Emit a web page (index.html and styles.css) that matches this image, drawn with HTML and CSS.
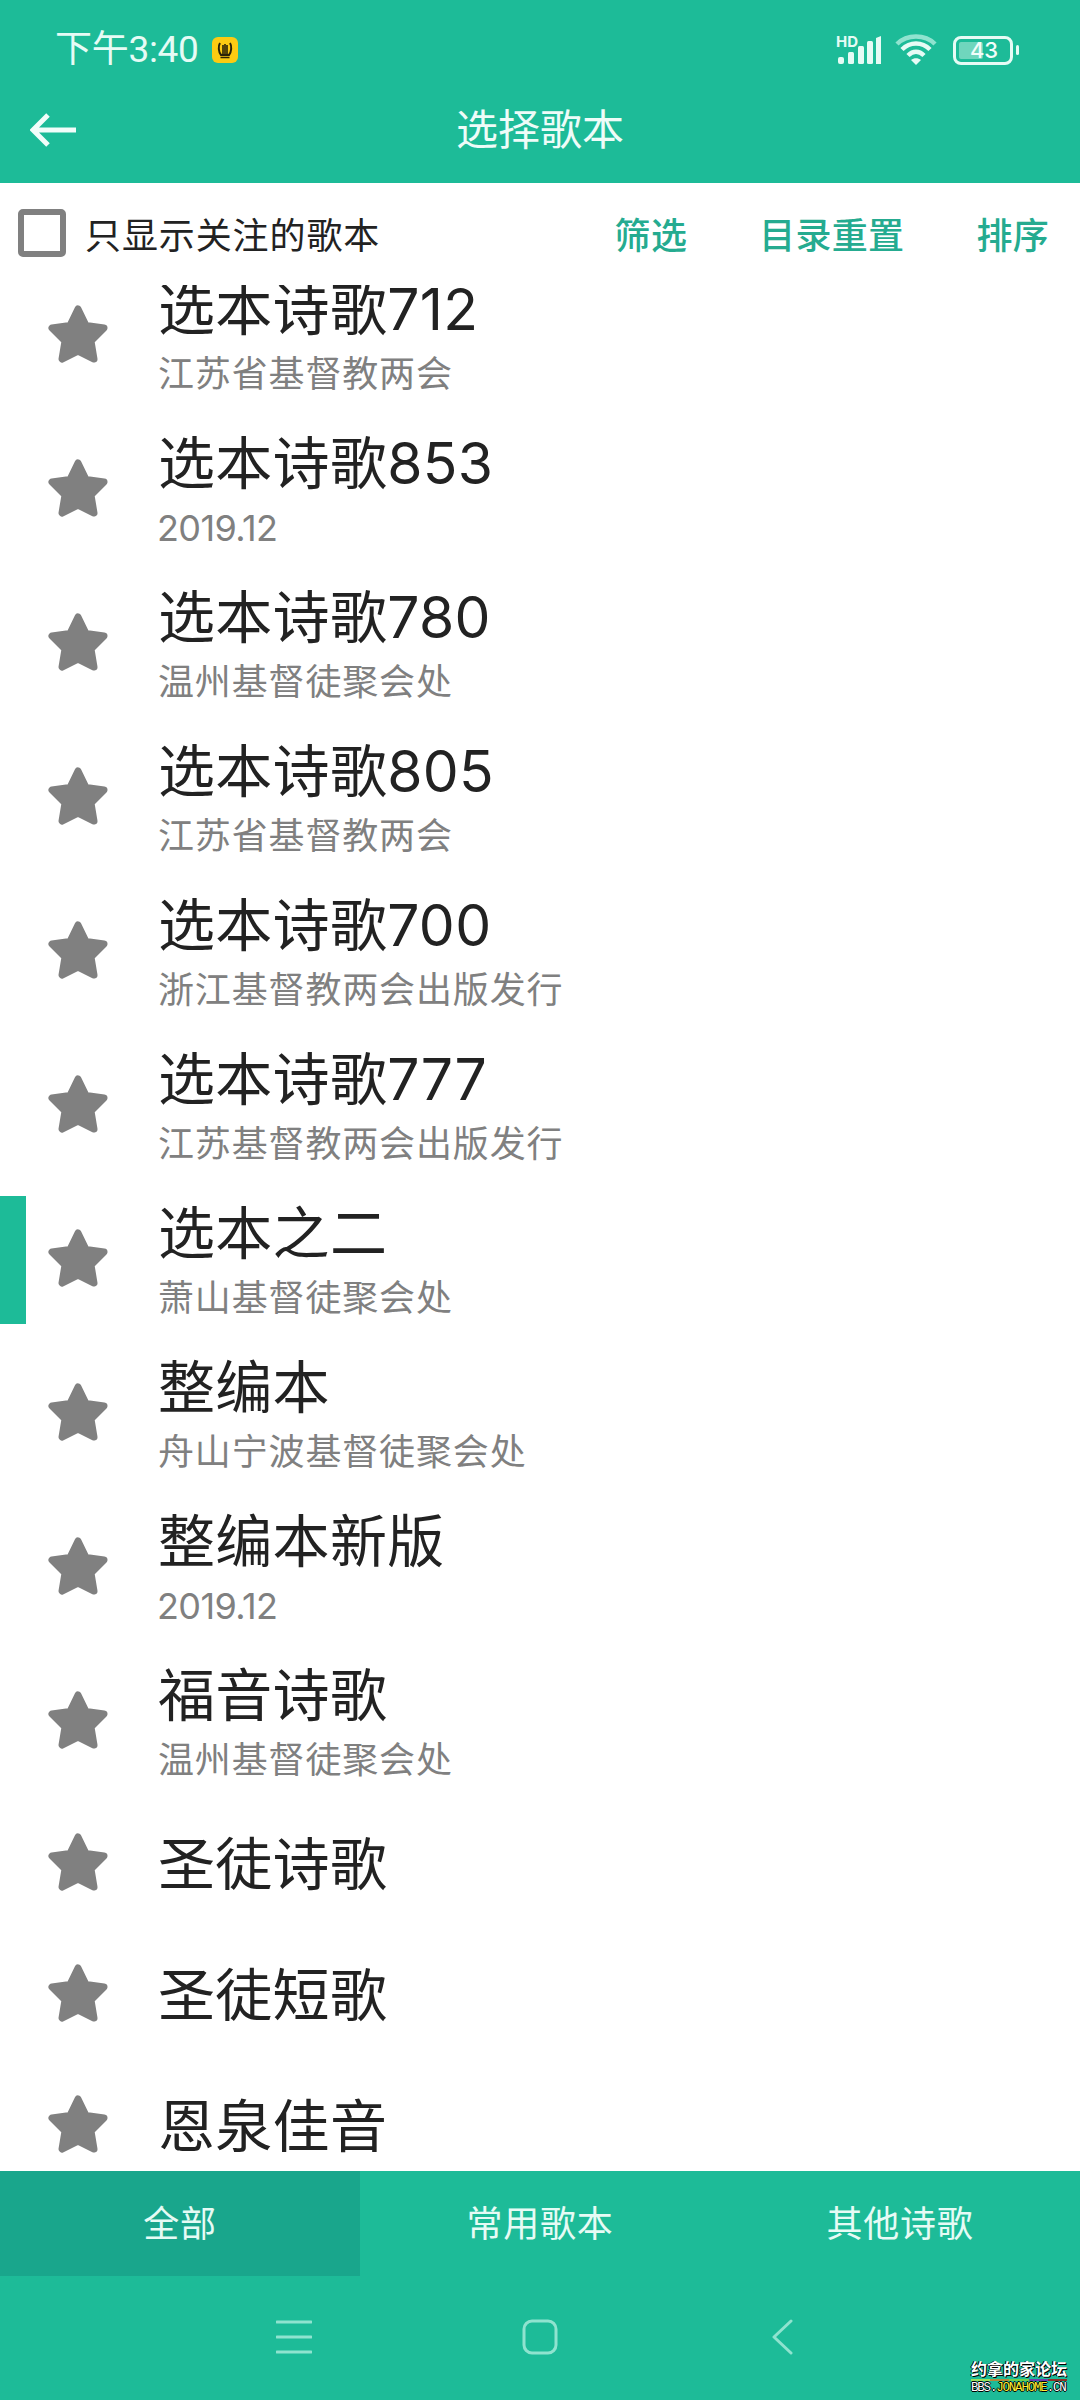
FILE: index.html
```html
<!DOCTYPE html>
<html lang="zh-CN">
<head>
<meta charset="utf-8">
<title>选择歌本</title>
<link rel="stylesheet" href="styles.css">
</head>
<body>
<svg class="defs" width="0" height="0" aria-hidden="true">
  <symbol id="star" viewBox="0 0 64 64">
    <path d="M32 6 L40 22.500 L58 25 L45 38 L48 56 L32 48 L16 56 L19 38 L6 25 L24 22.500 Z" fill="#808080" stroke="#808080" stroke-width="7" stroke-linejoin="round"/>
  </symbol>
</svg>
<div class="phone">
  <header class="header">
    <div class="status">
      <div class="status-left">
        <span class="time">下午3:40</span>
        <svg class="lyre" viewBox="0 0 26 26">
          <rect width="26" height="26" rx="6" fill="#fccb12"/>
          <path d="M8 6 C6 9 6.500 15 9 18 H17 C19.500 15 20 9 18 6" fill="none" stroke="#2a2208" stroke-width="2"/>
          <path d="M11 8V18M13 7V18M15 8V18M8.500 20.500H17.500" fill="none" stroke="#2a2208" stroke-width="1.600"/>
        </svg>
      </div>
      <div class="status-right">
        <svg class="signal" viewBox="0 0 46 30">
          <text x="0" y="12" class="hd">HD</text>
          <rect x="2" y="22" width="6" height="7" rx="2" fill="#e6fbf5"/>
          <rect x="12" y="17" width="6" height="12" rx="1.500" fill="#e6fbf5"/>
          <rect x="22" y="11" width="6" height="18" rx="1.500" fill="#e6fbf5"/>
          <rect x="31" y="6" width="6" height="23" rx="1.500" fill="#e6fbf5"/>
          <path d="M40 3 L45 1 V29 H40 Z" fill="#e6fbf5"/>
        </svg>
        <svg class="wifi" viewBox="0 0 42 32">
          <path d="M2 10 C12 0 30 0 40 10" fill="none" stroke="#8fe3cf" stroke-width="4.500"/>
          <path d="M7 15.500 C15 7.500 27 7.500 35 15.500" fill="none" stroke="#e6fbf5" stroke-width="4.500"/>
          <path d="M13 21.500 C18 16.500 24 16.500 29 21.500" fill="none" stroke="#e6fbf5" stroke-width="4.500"/>
          <path d="M21 31 L16 26 C19 23.500 23 23.500 26 26 Z" fill="#e6fbf5"/>
        </svg>
        <div class="battery">
          <div class="battery-body">
            <span class="battery-fill"></span>
            <span class="battery-num">43</span>
          </div>
          <span class="battery-nub"></span>
        </div>
      </div>
    </div>
    <div class="appbar">
      <svg class="back" viewBox="0 0 46 34">
        <path d="M2 17 H46 M18 2 L3 17 L18 32" fill="none" stroke="#f2fdfa" stroke-width="5"/>
      </svg>
      <h1 class="appbar-title">选择歌本</h1>
    </div>
  </header>

  <div class="toolbar">
    <span class="checkbox"></span>
    <span class="toolbar-label">只显示关注的歌本</span>
    <div class="actions">
      <span class="action">筛选</span>
      <span class="action">目录重置</span>
      <span class="action">排序</span>
    </div>
  </div>

  <main class="list">
    <div class="list-inner">
      <div class="row"><svg class="star"><use href="#star"/></svg><div class="text"><div class="title">选本诗歌712</div><div class="sub">江苏省基督教两会</div></div></div>
      <div class="row"><svg class="star"><use href="#star"/></svg><div class="text"><div class="title">选本诗歌853</div><div class="sub sub-date">2019.12</div></div></div>
      <div class="row"><svg class="star"><use href="#star"/></svg><div class="text"><div class="title">选本诗歌780</div><div class="sub">温州基督徒聚会处</div></div></div>
      <div class="row"><svg class="star"><use href="#star"/></svg><div class="text"><div class="title">选本诗歌805</div><div class="sub">江苏省基督教两会</div></div></div>
      <div class="row"><svg class="star"><use href="#star"/></svg><div class="text"><div class="title">选本诗歌700</div><div class="sub">浙江基督教两会出版发行</div></div></div>
      <div class="row"><svg class="star"><use href="#star"/></svg><div class="text"><div class="title">选本诗歌777</div><div class="sub">江苏基督教两会出版发行</div></div></div>
      <div class="row row-selected"><span class="marker"></span><svg class="star"><use href="#star"/></svg><div class="text"><div class="title">选本之二</div><div class="sub">萧山基督徒聚会处</div></div></div>
      <div class="row"><svg class="star"><use href="#star"/></svg><div class="text"><div class="title">整编本</div><div class="sub">舟山宁波基督徒聚会处</div></div></div>
      <div class="row"><svg class="star"><use href="#star"/></svg><div class="text"><div class="title">整编本新版</div><div class="sub sub-date">2019.12</div></div></div>
      <div class="row"><svg class="star"><use href="#star"/></svg><div class="text"><div class="title">福音诗歌</div><div class="sub">温州基督徒聚会处</div></div></div>
      <div class="row row-single"><svg class="star"><use href="#star"/></svg><div class="text"><div class="title">圣徒诗歌</div></div></div>
      <div class="row row-single"><svg class="star"><use href="#star"/></svg><div class="text"><div class="title">圣徒短歌</div></div></div>
      <div class="row row-single"><svg class="star"><use href="#star"/></svg><div class="text"><div class="title">恩泉佳音</div></div></div>
    </div>
  </main>

  <nav class="tabs">
    <div class="tab tab-active">全部</div>
    <div class="tab">常用歌本</div>
    <div class="tab">其他诗歌</div>
  </nav>

  <div class="sysnav">
    <svg class="nav-icon" viewBox="0 0 36 34">
      <path d="M1 2 H35 M1 17 H35 M1 32 H35" fill="none" stroke="#8fe3cf" stroke-width="3" stroke-linecap="round"/>
    </svg>
    <svg class="nav-icon" viewBox="0 0 36 36">
      <rect x="2" y="2" width="32" height="32" rx="8" fill="none" stroke="#8fe3cf" stroke-width="3"/>
    </svg>
    <svg class="nav-icon" viewBox="0 0 36 36">
      <path d="M23 2 L6 18 L23 34" fill="none" stroke="#8fe3cf" stroke-width="3" stroke-linecap="round" stroke-linejoin="round"/>
    </svg>
    <div class="watermark">
      <div class="wm-name">约拿的家论坛</div>
      <div class="wm-bar"><i class="c1"></i><i class="c2"></i><i class="c3"></i><i class="c4"></i><i class="c5"></i></div>
      <div class="wm-url">BBS.<b>JONAHOME</b>.CN</div>
    </div>
  </div>
</div>
</body>
</html>
```
FILE: styles.css
```css
* { box-sizing: border-box; }
html, body { margin: 0; padding: 0; background: #fff; }
body { font-family: Inter, "Noto Sans CJK SC", "Noto Sans", sans-serif; }
.defs { position: absolute; }

.phone {
  width: 1080px;
  height: 2400px;
  display: flex;
  flex-direction: column;
  overflow: hidden;
  position: relative;
}

/* header */
.header { background: #1dbb98; height: 183px; flex: none; color: #e6fbf5; }
.status {
  height: 77px;
  padding: 23px 0 0 55px;
  display: flex;
  align-items: center;
  justify-content: space-between;
}
.status-left { display: flex; align-items: center; gap: 13px; }
.time { font-family: Roboto, "Noto Sans CJK SC", sans-serif; font-size: 37px; line-height: 54px; letter-spacing: -0.3px; }
.lyre { width: 26px; height: 26px; }
.status-right { display: flex; align-items: center; padding-right: 61px; }
.signal { width: 46px; height: 30px; margin-right: 13px; overflow: visible; }
.hd { font: 700 15px Inter, sans-serif; fill: #e6fbf5; }
.wifi { width: 42px; height: 32px; margin-right: 16px; }
.battery { display: flex; align-items: center; gap: 3px; }
.battery-body {
  width: 60px;
  height: 29px;
  border: 3px solid #e6fbf5;
  border-radius: 8px;
  position: relative;
  display: flex;
  align-items: center;
  justify-content: center;
}
.battery-fill {
  position: absolute;
  left: 3px;
  top: 3px;
  bottom: 3px;
  width: 24px;
  background: #6fd6bd;
  border-radius: 2px;
}
.battery-num { position: relative; left: 1px; font-size: 22px; line-height: 23px; font-weight: 500; color: #f2fdfa; }
.battery-nub { width: 3px; height: 10px; background: #e6fbf5; border-radius: 2px; }

.appbar {
  height: 106px;
  display: flex;
  align-items: center;
  justify-content: center;
  position: relative;
}
.back { position: absolute; left: 30px; top: 36px; width: 46px; height: 34px; }
.appbar-title { margin: 0; font-size: 42px; line-height: 60px; font-weight: 400; color: #eefcf8; }

/* toolbar */
.toolbar {
  height: 102px;
  flex: none;
  display: flex;
  align-items: center;
  padding: 0 31px 2px 18px;
  background: #fff;
  position: relative;
  z-index: 1;
}
.checkbox {
  width: 48px;
  height: 48px;
  border: 6px solid #808080;
  border-radius: 5px;
  flex: none;
}
.toolbar-label { margin-left: 19px; font-size: 36px; letter-spacing: 0.9px; color: #222; }
.actions { margin-left: auto; display: flex; gap: 72px; }
.action { font-size: 36px; font-weight: 500; letter-spacing: 0.3px; color: #25ab90; }

/* list */
.list { flex: 1; min-height: 0; overflow: hidden; background: #fff; }
.list-inner { margin-top: -26px; }
.row {
  height: 154px;
  display: flex;
  align-items: center;
  padding-left: 46px;
  position: relative;
}
.row-single { height: 131px; }
.marker {
  position: absolute;
  left: 0;
  top: 13px;
  width: 26px;
  height: 128px;
  background: #1dbb98;
}
.star { width: 64px; height: 64px; flex: none; margin-top: -3px; }
.text { margin-left: 48px; }
.title { font-size: 57px; line-height: 76px; color: #222; letter-spacing: 0.3px; }
.sub { font-size: 36px; line-height: 52px; color: #808080; letter-spacing: 0.85px; }
.sub-date { letter-spacing: -0.6px; margin-left: -1px; }

/* tabs */
.tabs { height: 105px; flex: none; display: flex; background: #1dbb98; }
.tab {
  flex: 1;
  display: flex;
  align-items: center;
  justify-content: center;
  padding-bottom: 6px;
  font-size: 36px;
  letter-spacing: 0.8px;
  color: #e6fbf5;
}
.tab-active { background: #19a68c; }

/* system nav */
.sysnav {
  height: 124px;
  flex: none;
  background: #1dbb98;
  display: flex;
  align-items: center;
  justify-content: center;
  gap: 210px;
  position: relative;
}
.nav-icon { width: 36px; height: 36px; margin-top: -2px; }

/* watermark */
.watermark { position: absolute; left: 971px; top: 85px; width: 96px; }
.wm-name {
  font-size: 16px;
  line-height: 17px;
  font-weight: 700;
  color: #fff;
  white-space: nowrap;
  text-shadow: 1px 1px 0 #000, -1px 0 0 #000;
}
.wm-bar { display: flex; height: 2px; margin-top: 1px; }
.wm-bar i { flex: 1; }
.c1 { background: #9be05c; }
.c2 { background: #b08a3c; }
.c3 { background: #6ccf4c; }
.c4 { background: #6a3fb0; }
.c5 { background: #8a3328; }
.wm-url {
  font: 400 12.500px/13px "Liberation Mono", monospace;
  letter-spacing: -1.200px;
  color: #fff;
  white-space: nowrap;
  margin-top: 1px;
  text-shadow: 1px 0 0 #000, -1px 0 0 #000, 0 1px 0 #000, 0 -1px 0 #000;
}
.wm-url b { font-weight: 400; color: #ffee33; }
```
